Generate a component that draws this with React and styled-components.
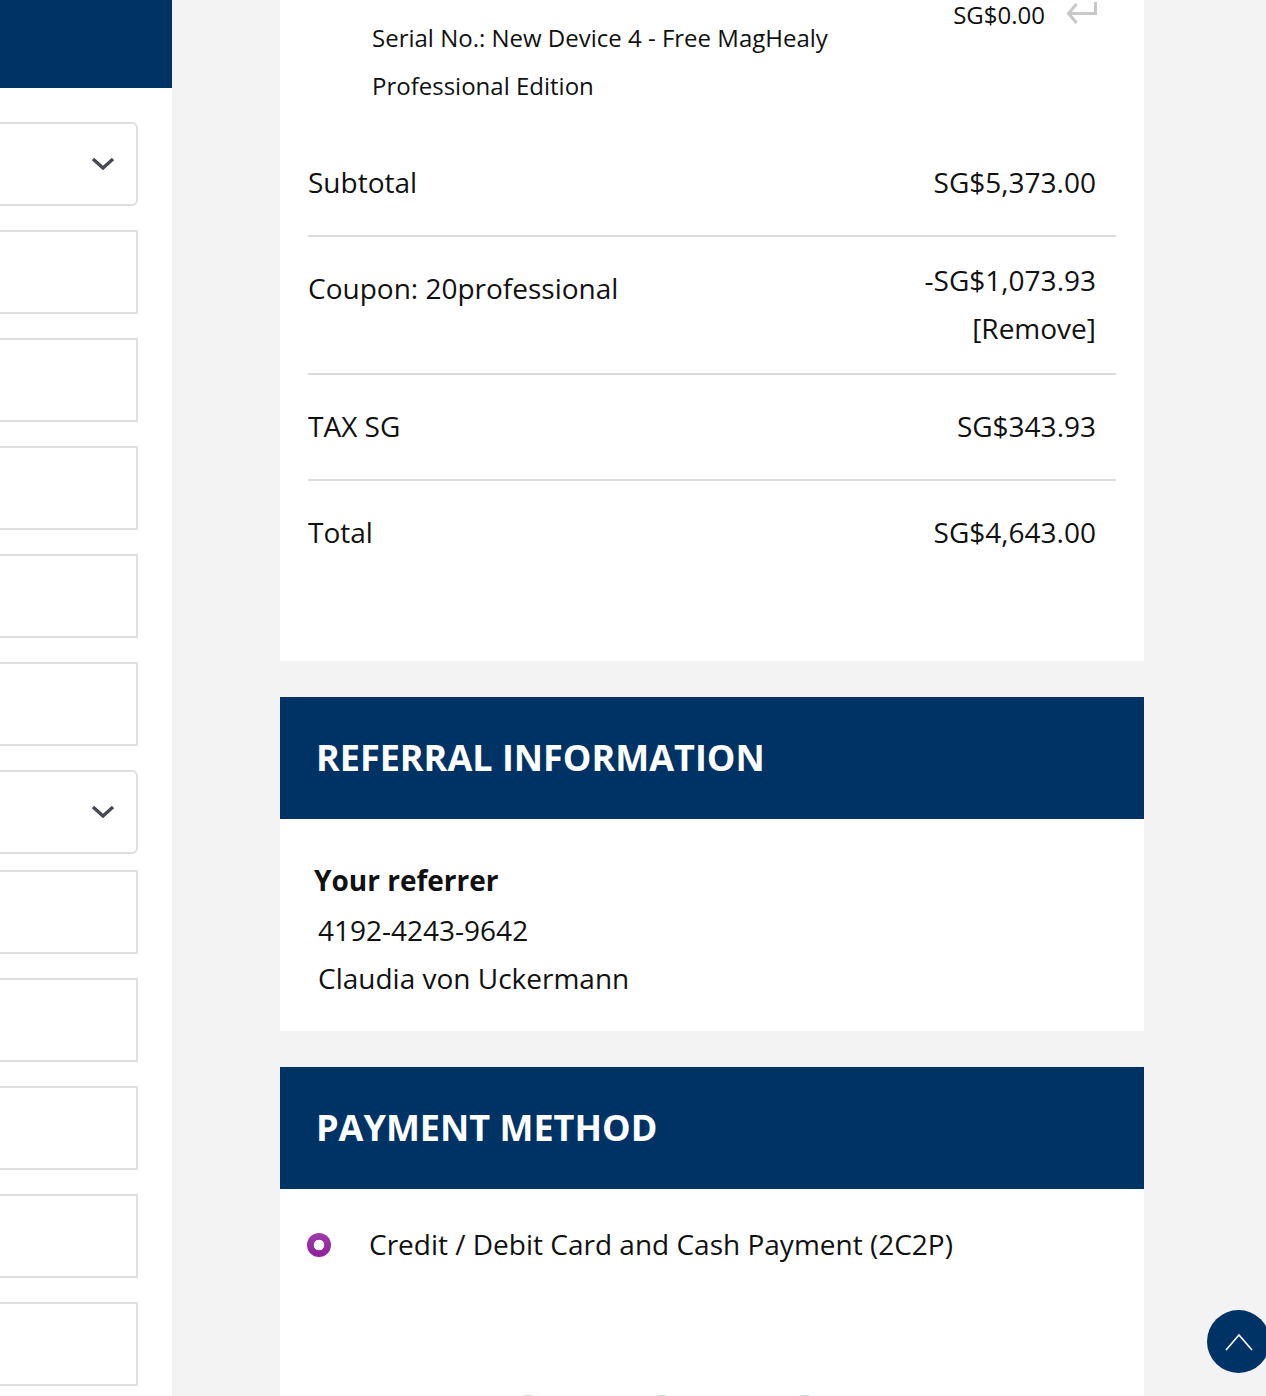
import React from 'react';
import styled, { createGlobalStyle } from 'styled-components';

const GlobalStyle = createGlobalStyle`
  html, body {
    margin: 0;
    padding: 0;
    background: #f3f3f3;
  }
  body {
    font-family: "Open Sans", "Noto Sans", sans-serif;
    color: #111;
  }
`;

const Page = styled.div`
  height: 1396px;
  overflow: hidden;
  display: flex;
  align-items: flex-start;
  gap: 108px;
`;

const BillingColumn = styled.section`
  flex: 0 0 172px;
  height: 1396px;
  background: #fff;
`;

const BillingHeader = styled.div`
  height: 88px;
  background: #003365;
`;

const BillingFields = styled.div`
  padding: 34px 34px 0 0;
  display: flex;
  flex-direction: column;
`;

const Field = styled.div`
  box-sizing: border-box;
  height: 84px;
  margin-bottom: ${(p) => p.$gap}px;
  border: 2px solid #dfdfdf;
  border-left: 0;
  border-radius: ${(p) => (p.$select ? '0 6px 6px 0' : '0')};
  background: #fff;
  display: flex;
  align-items: center;
  justify-content: flex-end;
  padding-right: 21px;
`;

// column is scrolled, so its top is cut off by the window
const OrderColumn = styled.main`
  flex: 0 0 864px;
  margin-top: -20px;
  display: flex;
  flex-direction: column;
  gap: 36px;
`;

const Card = styled.div`
  background: #fff;
`;

const LineItem = styled.div`
  height: 151px;
  padding: 0 46px 0 92px;
  display: flex;
  align-items: flex-start;
  font-size: 24px;
  line-height: 48px;
`;

const LineText = styled.div`
  flex: 0 0 480px;
  margin-top: 34px;
`;

const LinePrice = styled.div`
  margin: 20px 21px 0 auto;
  line-height: 30px;
`;

const ReturnIcon = styled.svg`
  margin-top: 21px;
`;

const Summary = styled.div`
  padding: 0 28px 76px;
`;

const SummaryRow = styled.div`
  display: flex;
  justify-content: space-between;
  padding: 27px 20px 29px 0;
  font-size: 28px;
  line-height: 48px;
  border-bottom: ${(p) => (p.$last ? '0' : '2px solid #dcdcdc')};
`;

const Amount = styled.div`
  text-align: right;
  margin: ${(p) => (p.$stacked ? '-8px 0' : '0')};
`;

const SectionTitle = styled.h2`
  box-sizing: border-box;
  margin: 0;
  height: 122px;
  padding: 0 0 2px 36px;
  display: flex;
  align-items: center;
  background: #003365;
  color: #fff;
  font-size: 36px;
  font-weight: 700;
  text-transform: uppercase;
`;

const Referrer = styled.div`
  padding: 37px 34px 29px;
  font-size: 28px;
  line-height: 48px;
`;

const ReferrerLabel = styled.div`
  font-weight: 700;
  margin-bottom: 2px;
`;

const ReferrerLine = styled.div`
  padding-left: 4px;
`;

const PaymentBody = styled(Card)`
  height: 300px;
  padding: 31px 27px 0;
`;

const PaymentOption = styled.label`
  display: flex;
  align-items: center;
  gap: 38px;
  font-size: 28px;
  line-height: 48px;
`;

const Radio = styled.span`
  width: 24px;
  height: 24px;
  margin-top: 2px;
  border-radius: 50%;
  background: radial-gradient(circle, #fff 0 5px, transparent 5.6px),
    linear-gradient(#a23bab, #8e1f9c);
`;

const CardLogoRow = styled.div`
  margin-top: 127px;
  padding-left: 203px;
  display: flex;
`;

const CardLogo = styled.span`
  width: 36px;
  height: 36px;
  margin-right: ${(p) => p.$gap}px;
  border-radius: 50%;
  background: #cdd8d8;
`;

const ScrollTop = styled.button`
  position: fixed;
  left: 1207px;
  top: 1310px;
  width: 63px;
  height: 63px;
  padding: 0;
  border: 0;
  border-radius: 50%;
  background: #003365;
  display: flex;
  align-items: center;
  justify-content: center;
`;

const Chevron = () => (
  <svg width="24" height="14" viewBox="0 0 24 14" fill="none">
    <path d="M2 2l10 9 10-9" stroke="#434a54" strokeWidth="3.4" />
  </svg>
);

const fields = [
  { select: true, gap: 24 },
  { gap: 24 },
  { gap: 24 },
  { gap: 24 },
  { gap: 24 },
  { gap: 24 },
  { select: true, gap: 16 },
  { gap: 24 },
  { gap: 24 },
  { gap: 24 },
  { gap: 24 },
  { gap: 24 },
];

export default function App() {
  return (
    <>
      <GlobalStyle />
      <Page>
        <BillingColumn>
          <BillingHeader />
          <BillingFields>
            {fields.map((f, i) => (
              <Field key={i} $select={f.select} $gap={f.gap}>
                {f.select && <Chevron />}
              </Field>
            ))}
          </BillingFields>
        </BillingColumn>
        <OrderColumn>
          <Card>
            <LineItem>
              <LineText>Serial No.: New Device 4 - Free MagHealy Professional Edition</LineText>
              <LinePrice>SG$0.00</LinePrice>
              <ReturnIcon width="32" height="24" viewBox="0 0 32 24" fill="none">
                <path d="M29.5 1v11.5H2.5M10.5 3l-8 9.5 8 9.5" stroke="#c8c8c8" strokeWidth="3" />
              </ReturnIcon>
            </LineItem>
            <Summary>
              <SummaryRow>
                <div>Subtotal</div>
                <Amount>SG$5,373.00</Amount>
              </SummaryRow>
              <SummaryRow>
                <div>Coupon: 20professional</div>
                <Amount $stacked>
                  -SG$1,073.93
                  <br />
                  [Remove]
                </Amount>
              </SummaryRow>
              <SummaryRow>
                <div>TAX SG</div>
                <Amount>SG$343.93</Amount>
              </SummaryRow>
              <SummaryRow $last>
                <div>Total</div>
                <Amount>SG$4,643.00</Amount>
              </SummaryRow>
            </Summary>
          </Card>
          <div>
            <SectionTitle>Referral Information</SectionTitle>
            <Card>
              <Referrer>
                <ReferrerLabel>Your referrer</ReferrerLabel>
                <ReferrerLine>4192-4243-9642</ReferrerLine>
                <ReferrerLine>Claudia von Uckermann</ReferrerLine>
              </Referrer>
            </Card>
          </div>
          <div>
            <SectionTitle>Payment Method</SectionTitle>
            <PaymentBody>
              <PaymentOption>
                <Radio />
                Credit / Debit Card and Cash Payment (2C2P)
              </PaymentOption>
              <CardLogoRow>
                <CardLogo $gap={98} />
                <CardLogo $gap={107} />
                <CardLogo $gap={0} />
              </CardLogoRow>
            </PaymentBody>
          </div>
        </OrderColumn>
      </Page>
      <ScrollTop aria-label="Back to top">
        <svg width="30" height="18" viewBox="0 0 30 18" fill="none">
          <path d="M2 17L15 2l13 15" stroke="#fff" strokeWidth="1.6" />
        </svg>
      </ScrollTop>
    </>
  );
}
